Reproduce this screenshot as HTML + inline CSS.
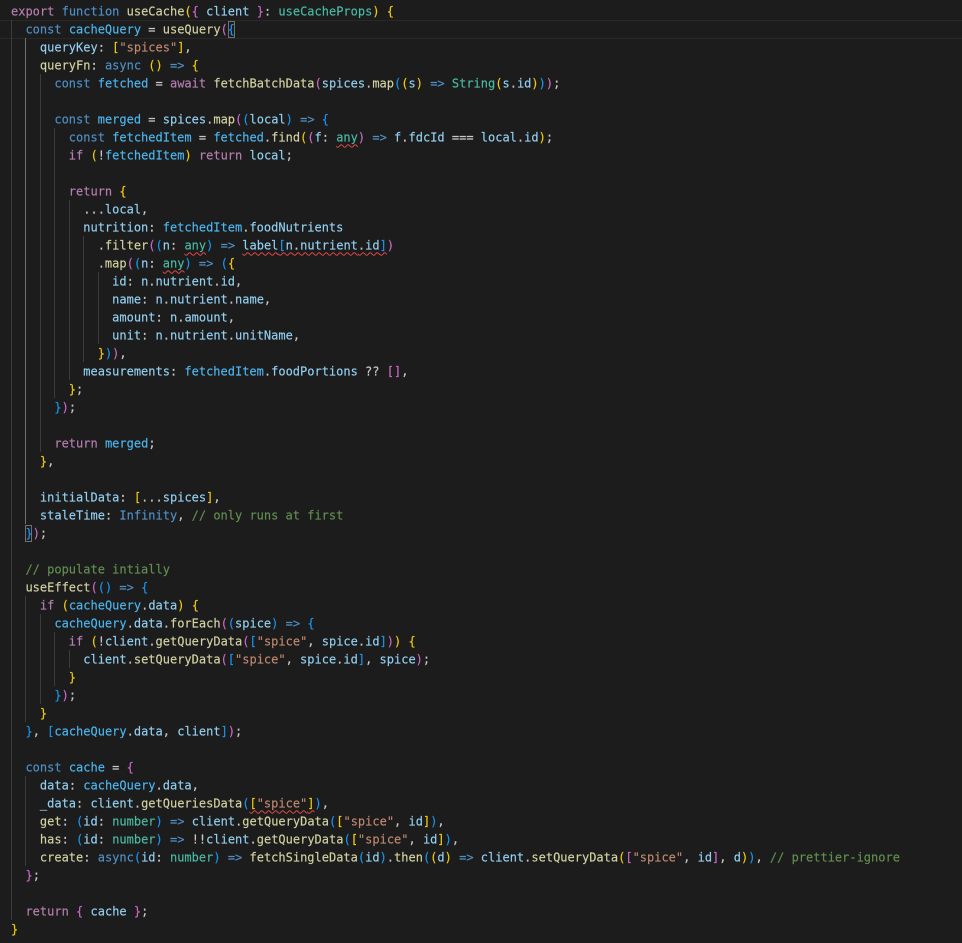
<!DOCTYPE html>
<html><head><meta charset="utf-8"><style>
html,body{margin:0;padding:0;background:#1c1c1c;width:962px;height:943px;overflow:hidden}
#e{position:relative;width:962px;height:943px;overflow:hidden;background:#1c1c1c}
pre{position:absolute;left:11px;top:2px;margin:0;font:12px/18px "DejaVu Sans Mono",monospace;color:#c8c8c8;white-space:pre;-webkit-text-stroke:.15px currentColor;filter:blur(.3px);transform:translateY(.4px)}
i{font-style:normal}
.k{color:#b77eb3}.b{color:#4f8fc6}.v{color:#92cff0}.c{color:#4cb6f0}.f{color:#d2d2a2}.t{color:#4abba4}.s{color:#bf8870}.m{color:#628f50}.g{color:#f0cb10}.p{color:#cc68c8}.l{color:#1796f0}
.w{text-decoration:underline wavy #e04848 1px;text-underline-offset:2px}
.h{position:absolute;left:0;width:962px;height:17px;top:20px;border-top:1px solid #282828;border-bottom:1px solid #282828}
.r{position:absolute;width:1px;background:#3c3c3c}
.x{position:absolute;width:5px;height:15px;border:1px solid #707070}
</style></head><body><div id="e">
<div class="h"></div>
<div class="r" style="left:11px;top:20px;height:900px"></div>
<div class="r" style="left:25px;top:38px;height:486px;background:#707070"></div>
<div class="r" style="left:25px;top:596px;height:126px"></div>
<div class="r" style="left:25px;top:776px;height:90px"></div>
<div class="r" style="left:40px;top:74px;height:378px"></div>
<div class="r" style="left:40px;top:614px;height:90px"></div>
<div class="r" style="left:54px;top:128px;height:270px"></div>
<div class="r" style="left:54px;top:632px;height:54px"></div>
<div class="r" style="left:69px;top:200px;height:180px"></div>
<div class="r" style="left:69px;top:650px;height:18px"></div>
<div class="r" style="left:83px;top:236px;height:126px"></div>
<div class="r" style="left:98px;top:272px;height:72px"></div>
<div class="x" style="left:228px;top:21px"></div>
<div class="x" style="left:25px;top:525px"></div>
<pre><i class="k">export</i> <i class="b">function</i> <i class="f">useCache</i><i class="g">(</i><i class="p">{</i> <i class="v">client</i> <i class="p">}</i>: <i class="t">useCacheProps</i><i class="g">)</i> <i class="g">{</i>
  <i class="b">const</i> <i class="c">cacheQuery</i> = <i class="f">useQuery</i><i class="p">(</i><i class="l">{</i>
    <i class="v">queryKey</i>: <i class="g">[</i><i class="s">"spices"</i><i class="g">]</i>,
    <i class="f">queryFn</i>: <i class="b">async</i> <i class="g">()</i> <i class="b">=&gt;</i> <i class="g">{</i>
      <i class="b">const</i> <i class="c">fetched</i> = <i class="k">await</i> <i class="f">fetchBatchData</i><i class="p">(</i><i class="v">spices</i>.<i class="f">map</i><i class="l">(</i><i class="g">(</i><i class="v">s</i><i class="g">)</i> <i class="b">=&gt;</i> <i class="t">String</i><i class="g">(</i><i class="v">s</i>.<i class="v">id</i><i class="g">)</i><i class="l">)</i><i class="p">)</i>;

      <i class="b">const</i> <i class="c">merged</i> = <i class="v">spices</i>.<i class="f">map</i><i class="p">(</i><i class="l">(</i><i class="v">local</i><i class="l">)</i> <i class="b">=&gt;</i> <i class="l">{</i>
        <i class="b">const</i> <i class="c">fetchedItem</i> = <i class="c">fetched</i>.<i class="f">find</i><i class="g">(</i><i class="p">(</i><i class="v">f</i>: <i class="t w">any</i><i class="p">)</i> <i class="b">=&gt;</i> <i class="v">f</i>.<i class="v">fdcId</i> === <i class="v">local</i>.<i class="v">id</i><i class="g">)</i>;
        <i class="k">if</i> <i class="g">(</i>!<i class="c">fetchedItem</i><i class="g">)</i> <i class="k">return</i> <i class="v">local</i>;

        <i class="k">return</i> <i class="g">{</i>
          ...<i class="v">local</i>,
          <i class="v">nutrition</i>: <i class="c">fetchedItem</i>.<i class="v">foodNutrients</i>
            .<i class="f">filter</i><i class="p">(</i><i class="l">(</i><i class="v">n</i>: <i class="t w">any</i><i class="l">)</i> <i class="b">=&gt;</i> <span class="w"><i class="v">label</i><i class="l">[</i><i class="v">n</i>.<i class="v">nutrient</i>.<i class="v">id</i><i class="l">]</i></span><i class="p">)</i>
            .<i class="f">map</i><i class="p">(</i><i class="l">(</i><i class="v">n</i>: <i class="t w">any</i><i class="l">)</i> <i class="b">=&gt;</i> <i class="l">(</i><i class="g">{</i>
              <i class="v">id</i>: <i class="v">n</i>.<i class="v">nutrient</i>.<i class="v">id</i>,
              <i class="v">name</i>: <i class="v">n</i>.<i class="v">nutrient</i>.<i class="v">name</i>,
              <i class="v">amount</i>: <i class="v">n</i>.<i class="v">amount</i>,
              <i class="v">unit</i>: <i class="v">n</i>.<i class="v">nutrient</i>.<i class="v">unitName</i>,
            <i class="g">}</i><i class="l">)</i><i class="p">)</i>,
          <i class="v">measurements</i>: <i class="c">fetchedItem</i>.<i class="v">foodPortions</i> ?? <i class="p">[]</i>,
        <i class="g">}</i>;
      <i class="l">}</i><i class="p">)</i>;

      <i class="k">return</i> <i class="c">merged</i>;
    <i class="g">}</i>,

    <i class="v">initialData</i>: <i class="g">[</i>...<i class="v">spices</i><i class="g">]</i>,
    <i class="v">staleTime</i>: <i class="b">Infinity</i>, <i class="m">// only runs at first</i>
  <i class="l">}</i><i class="p">)</i>;

  <i class="m">// populate intially</i>
  <i class="f">useEffect</i><i class="p">(</i><i class="l">()</i> <i class="b">=&gt;</i> <i class="l">{</i>
    <i class="k">if</i> <i class="g">(</i><i class="c">cacheQuery</i>.<i class="v">data</i><i class="g">)</i> <i class="g">{</i>
      <i class="c">cacheQuery</i>.<i class="v">data</i>.<i class="f">forEach</i><i class="p">(</i><i class="l">(</i><i class="v">spice</i><i class="l">)</i> <i class="b">=&gt;</i> <i class="l">{</i>
        <i class="k">if</i> <i class="g">(</i>!<i class="v">client</i>.<i class="f">getQueryData</i><i class="p">(</i><i class="l">[</i><i class="s">"spice"</i>, <i class="v">spice</i>.<i class="v">id</i><i class="l">]</i><i class="p">)</i><i class="g">)</i> <i class="g">{</i>
          <i class="v">client</i>.<i class="f">setQueryData</i><i class="p">(</i><i class="l">[</i><i class="s">"spice"</i>, <i class="v">spice</i>.<i class="v">id</i><i class="l">]</i>, <i class="v">spice</i><i class="p">)</i>;
        <i class="g">}</i>
      <i class="l">}</i><i class="p">)</i>;
    <i class="g">}</i>
  <i class="l">}</i>, <i class="l">[</i><i class="c">cacheQuery</i>.<i class="v">data</i>, <i class="v">client</i><i class="l">]</i><i class="p">)</i>;

  <i class="b">const</i> <i class="c">cache</i> = <i class="p">{</i>
    <i class="v">data</i>: <i class="c">cacheQuery</i>.<i class="v">data</i>,
    <i class="v">_data</i>: <i class="v">client</i>.<i class="f">getQueriesData</i><i class="l">(</i><span class="w"><i class="g">[</i><i class="s">"spice"</i><i class="g">]</i></span><i class="l">)</i>,
    <i class="f">get</i>: <i class="l">(</i><i class="v">id</i>: <i class="t">number</i><i class="l">)</i> <i class="b">=&gt;</i> <i class="v">client</i>.<i class="f">getQueryData</i><i class="l">(</i><i class="g">[</i><i class="s">"spice"</i>, <i class="v">id</i><i class="g">]</i><i class="l">)</i>,
    <i class="f">has</i>: <i class="l">(</i><i class="v">id</i>: <i class="t">number</i><i class="l">)</i> <i class="b">=&gt;</i> !!<i class="v">client</i>.<i class="f">getQueryData</i><i class="l">(</i><i class="g">[</i><i class="s">"spice"</i>, <i class="v">id</i><i class="g">]</i><i class="l">)</i>,
    <i class="f">create</i>: <i class="b">async</i><i class="l">(</i><i class="v">id</i>: <i class="t">number</i><i class="l">)</i> <i class="b">=&gt;</i> <i class="f">fetchSingleData</i><i class="l">(</i><i class="v">id</i><i class="l">)</i>.<i class="f">then</i><i class="l">(</i><i class="g">(</i><i class="v">d</i><i class="g">)</i> <i class="b">=&gt;</i> <i class="v">client</i>.<i class="f">setQueryData</i><i class="g">(</i><i class="p">[</i><i class="s">"spice"</i>, <i class="v">id</i><i class="p">]</i>, <i class="v">d</i><i class="g">)</i><i class="l">)</i>, <i class="m">// prettier-ignore</i>
  <i class="p">}</i>;

  <i class="k">return</i> <i class="p">{</i> <i class="v">cache</i> <i class="p">}</i>;
<i class="g">}</i></pre>
</div></body></html>
